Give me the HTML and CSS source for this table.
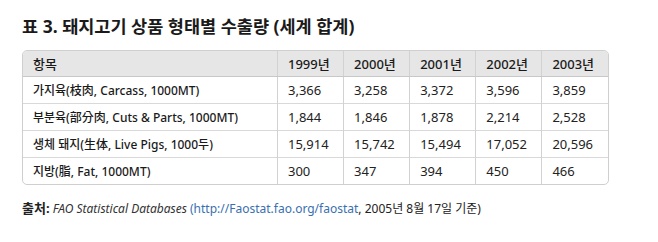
FILE: index.html
```html
<!DOCTYPE html>
<html lang="ko">
<head>
<meta charset="utf-8">
<link rel="stylesheet" href="styles.css">
</head>
<body>
<div class="page">
  <h3 class="title">표 3. 돼지고기 상품 형태별 수출량 (세계 합계)</h3>
  <div class="table-wrap">
    <table class="data">
      <thead>
        <tr><th class="item">항목</th><th>1999년</th><th>2000년</th><th>2001년</th><th>2002년</th><th>2003년</th></tr>
      </thead>
      <tbody>
        <tr><td class="item">가지육(枝肉, Carcass, 1000MT)</td><td>3,366</td><td>3,258</td><td>3,372</td><td>3,596</td><td>3,859</td></tr>
        <tr><td class="item">부분육(部分肉, Cuts &amp; Parts, 1000MT)</td><td>1,844</td><td>1,846</td><td>1,878</td><td>2,214</td><td>2,528</td></tr>
        <tr><td class="item">생체 돼지(生体, Live Pigs, 1000두)</td><td>15,914</td><td>15,742</td><td>15,494</td><td>17,052</td><td>20,596</td></tr>
        <tr><td class="item">지방(脂, Fat, 1000MT)</td><td>300</td><td>347</td><td>394</td><td>450</td><td>466</td></tr>
      </tbody>
    </table>
  </div>
  <p class="source"><strong>출처:</strong> <em>FAO Statistical Databases</em> <span class="link">(http://Faostat.fao.org/faostat</span>, 2005년 8월 17일 기준)</p>
</div>
</body>
</html>
```
FILE: styles.css
```css
html, body {
  margin: 0;
  padding: 0;
  background: #ffffff;
}
body {
  font-family: "Noto Sans", "Noto Sans CJK KR", sans-serif;
  color: #222222;
}
.page {
  padding: 13px 22px 0 22px;
  width: 587px;
}
.title {
  margin: 0;
  font-size: 17.5px;
  font-weight: 700;
  line-height: 26px;
  color: #1a1a1a;
}
.table-wrap {
  margin-top: 11px;
  border: 1px solid #cfcfcf;
  border-radius: 5px;
  overflow: hidden;
}
.data {
  width: 100%;
  border-collapse: collapse;
  table-layout: fixed;
  font-size: 13px;
}
.data th, .data td {
  text-align: left;
  padding: 0 10px;
  border-left: 1px solid #d2d2d2;
  border-top: 1px solid #d9d9d9;
  white-space: nowrap;
}
.data th:first-child, .data td:first-child {
  border-left: none;
  width: 234px;
}
.data thead th {
  border-top: none;
  background: #e6e6e6;
  font-weight: 500;
  height: 25px;
  border-bottom: 1px solid #c8c8c8;
  color: #1a1a1a;
}
.data tbody tr:first-child td {
  border-top: none;
}
.data td {
  height: 26px;
  color: #222222;
}
.data td.item {
  font-size: 12px;
  font-weight: 500;
  color: #1a1a1a;
}
.source {
  margin: 13px 0 0 0;
  font-size: 12px;
  line-height: 20px;
  color: #222222;
}
.source strong {
  font-weight: 700;
  font-size: 13px;
}
.source em {
  font-style: italic;
  color: #333333;
}
.source .link {
  color: #3a6fb0;
}
```
